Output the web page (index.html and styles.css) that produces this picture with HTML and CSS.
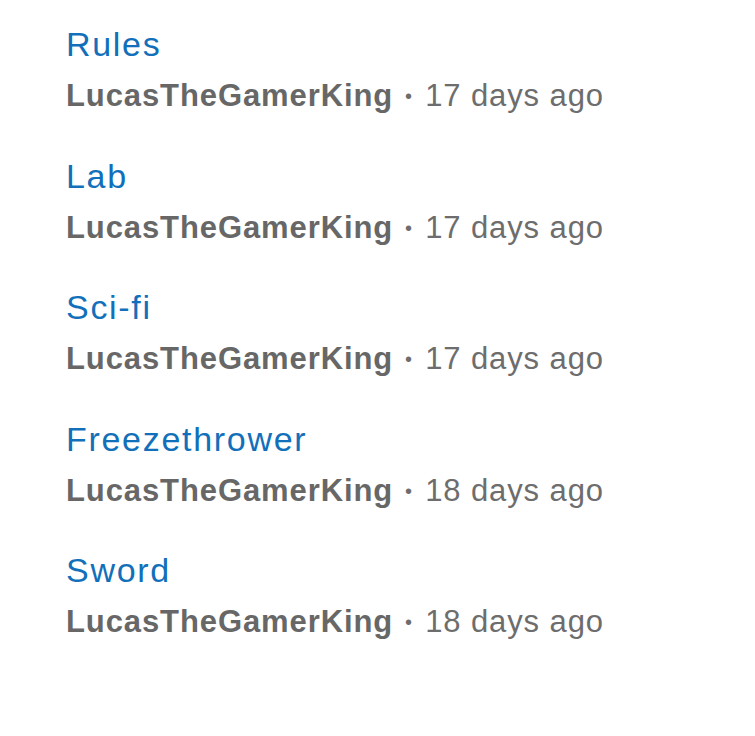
FILE: index.html
```html
<!DOCTYPE html>
<html>
<head>
    <meta charset="utf-8">
    <link rel="stylesheet" href="styles.css">
</head>
<body>
	<ul class="postlist">
		<li class="post">
			<a class="posttitle" href="#">Rules</a>
			<div class="postmeta"><b class="author">LucasTheGamerKing</b><span class="dot">&bull;</span>17 days ago</div>
		</li>
		<li class="post">
			<a class="posttitle" href="#">Lab</a>
			<div class="postmeta"><b class="author">LucasTheGamerKing</b><span class="dot">&bull;</span>17 days ago</div>
		</li>
		<li class="post">
			<a class="posttitle" href="#">Sci-fi</a>
			<div class="postmeta"><b class="author">LucasTheGamerKing</b><span class="dot">&bull;</span>17 days ago</div>
		</li>
		<li class="post">
			<a class="posttitle" href="#">Freezethrower</a>
			<div class="postmeta"><b class="author">LucasTheGamerKing</b><span class="dot">&bull;</span>18 days ago</div>
		</li>
		<li class="post">
			<a class="posttitle" href="#">Sword</a>
			<div class="postmeta"><b class="author">LucasTheGamerKing</b><span class="dot">&bull;</span>18 days ago</div>
		</li>
	</ul>
</body>
</html>
```
FILE: styles.css
```css
body { margin:0; background-color:#fff; font-family:"Liberation Sans", Arial, sans-serif; }

.postlist { list-style:none; margin:0; padding:17px 0 0 66px; display:flex; flex-direction:column; gap:28.5px; }

.posttitle { display:block; font-size:34px; line-height:55px; letter-spacing:1.7px; color:#1270ba; text-decoration:none; }
.postmeta { font-size:31px; line-height:48px; letter-spacing:0.9px; color:#6d6d6d; }
.author { font-weight:bold; color:#676767; }
.dot { font-size:20px; margin:0 13px 0 12px; vertical-align:3px; letter-spacing:0; }
```
